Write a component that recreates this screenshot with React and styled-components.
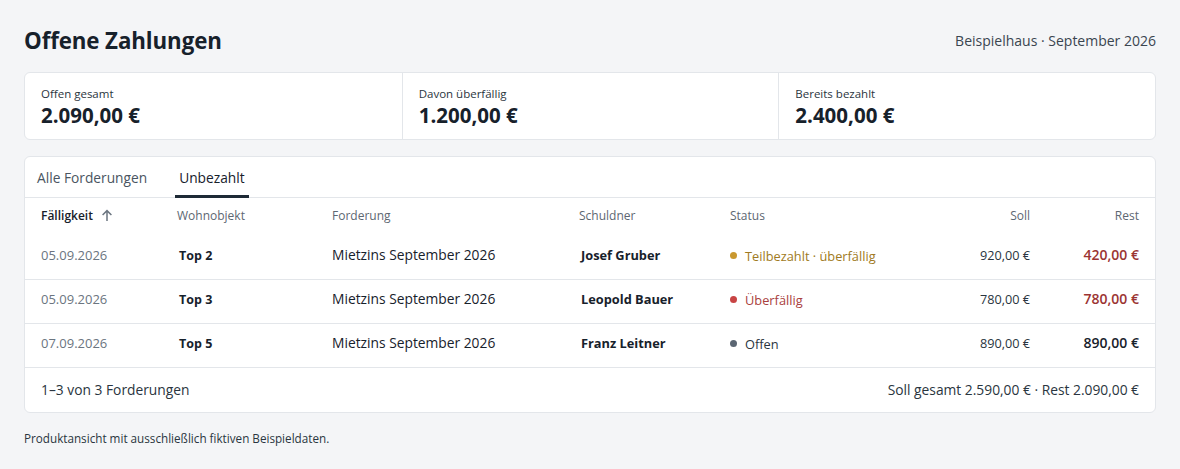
import React from 'react'
import styled, { createGlobalStyle } from 'styled-components'

const GlobalStyle = createGlobalStyle`
  html, body {
    margin: 0;
    padding: 0;
    background: #f4f5f7;
  }
  body {
    font-family: "Open Sans", "Noto Sans", "Liberation Sans", sans-serif;
    color: #1b2530;
  }
`

const Page = styled.div`
  padding: 24px 24px 20px;
`

const Header = styled.header`
  display: flex;
  align-items: center;
  justify-content: space-between;
  height: 32px;
  margin-bottom: 16px;
`

const Title = styled.h1`
  margin: 0;
  font-size: 22.3px;
  font-weight: 700;
  letter-spacing: -0.1px;
  color: #17212b;
`

const Context = styled.div`
  font-size: 14px;
  color: #3a4550;
`

const Stats = styled.section`
  display: grid;
  grid-template-columns: repeat(3, 1fr);
  background: #fff;
  border: 1px solid #e3e6ea;
  border-radius: 6px;
  margin-bottom: 16px;
`

const Stat = styled.div`
  padding: 12px 16px 11px;
  border-left: 1px solid #e3e6ea;
  &:first-child {
    border-left: none;
  }
`

const StatLabel = styled.div`
  font-size: 11.5px;
  color: #2a3540;
  line-height: 17px;
`

const StatValue = styled.div`
  font-size: 20.5px;
  font-weight: 700;
  line-height: 26px;
  color: #17212b;
`

const Card = styled.section`
  background: #fff;
  border: 1px solid #e3e6ea;
  border-radius: 6px;
`

const Tabs = styled.nav`
  display: flex;
  gap: 24px;
  padding: 0 8px;
  height: 40px;
  border-bottom: 1px solid #e3e6ea;
`

const Tab = styled.div`
  display: flex;
  align-items: center;
  padding: 2px 4px 0;
  font-size: 13.75px;
  color: ${p => (p.$active ? '#17212b' : '#4a5561')};
  font-weight: ${p => (p.$active ? 500 : 400)};
  border-bottom: 3px solid ${p => (p.$active ? '#1e2a36' : 'transparent')};
  margin-bottom: -1px;
`

const Table = styled.table`
  width: 100%;
  border-collapse: collapse;
`

const Th = styled.th`
  text-align: ${p => (p.$right ? 'right' : 'left')};
  vertical-align: middle;
  font-size: 12px;
  line-height: 16px;
  font-weight: ${p => (p.$sorted ? 600 : 400)};
  color: ${p => (p.$sorted ? '#17212b' : '#5d6772')};
  height: 36px;
  padding: 0 8px 2px;
  &:first-child {
    padding-left: 16px;
  }
  &:last-child {
    padding-right: 16px;
  }
`

const Tr = styled.tr`
  & + & td {
    border-top: 1px solid #e3e6ea;
  }
`

const Td = styled.td`
  height: 38px;
  padding: 0 8px 5px;
  font-size: 13px;
  line-height: 18px;
  vertical-align: middle;
  text-align: ${p => (p.$right ? 'right' : 'left')};
  &:first-child {
    padding-left: 16px;
  }
  &:last-child {
    padding-right: 16px;
  }
`

const DateText = styled.span`
  font-size: 13px;
  color: #6b7580;
`

const Unit = styled.span`
  font-size: 12.5px;
  font-weight: 700;
  color: #17212b;
  padding-left: 2px;
`

const Claim = styled.span`
  font-size: 13.8px;
  font-weight: 500;
  color: #17212b;
`

const Debtor = styled.span`
  font-size: 12.8px;
  font-weight: 700;
  color: #17212b;
  padding-left: 2px;
`

const Status = styled.span`
  display: inline-flex;
  align-items: center;
  gap: 8px;
  font-size: 12.8px;
  color: ${p => p.$color};
`

const Dot = styled.span`
  width: 7px;
  height: 7px;
  border-radius: 50%;
  background: ${p => p.$color};
`

const Amount = styled.span`
  font-size: 12.7px;
  color: #2a3540;
`

const Rest = styled.span`
  font-size: 14px;
  font-weight: 600;
  color: ${p => (p.$due ? '#9b3432' : '#17212b')};
`

const Footer = styled.div`
  display: flex;
  justify-content: space-between;
  align-items: center;
  height: 43px;
  padding: 0 16px 1px;
  border-top: 1px solid #e3e6ea;
  font-size: 13.8px;
  color: #2a3540;
`

const Note = styled.p`
  margin: 17px 0 0;
  font-size: 11.7px;
  color: #2a3540;
`

const SortArrow = () => (
  <svg width="12" height="13" viewBox="0 0 12 13" style={{ marginLeft: 8, verticalAlign: '-2px' }}>
    <path d="M6 12V1.6M1.6 6L6 1.6 10.4 6" fill="none" stroke="#6b7580" strokeWidth="1.5" />
  </svg>
)

const statusStyles = {
  partial: { dot: '#c9982f', text: '#a07a22', label: 'Teilbezahlt · überfällig' },
  overdue: { dot: '#c84444', text: '#a9403d', label: 'Überfällig' },
  open: { dot: '#5b6672', text: '#2a3540', label: 'Offen' },
}

const rows = [
  { date: '05.09.2026', unit: 'Top 2', claim: 'Mietzins September 2026', debtor: 'Josef Gruber', status: 'partial', soll: '920,00 €', rest: '420,00 €', due: true },
  { date: '05.09.2026', unit: 'Top 3', claim: 'Mietzins September 2026', debtor: 'Leopold Bauer', status: 'overdue', soll: '780,00 €', rest: '780,00 €', due: true },
  { date: '07.09.2026', unit: 'Top 5', claim: 'Mietzins September 2026', debtor: 'Franz Leitner', status: 'open', soll: '890,00 €', rest: '890,00 €', due: false },
]

export default function App() {
  return (
    <>
      <GlobalStyle />
      <Page>
        <Header>
          <Title>Offene Zahlungen</Title>
          <Context>Beispielhaus · September 2026</Context>
        </Header>

        <Stats>
          <Stat>
            <StatLabel>Offen gesamt</StatLabel>
            <StatValue>2.090,00 €</StatValue>
          </Stat>
          <Stat>
            <StatLabel>Davon überfällig</StatLabel>
            <StatValue>1.200,00 €</StatValue>
          </Stat>
          <Stat>
            <StatLabel>Bereits bezahlt</StatLabel>
            <StatValue>2.400,00 €</StatValue>
          </Stat>
        </Stats>

        <Card>
          <Tabs>
            <Tab>Alle Forderungen</Tab>
            <Tab $active>Unbezahlt</Tab>
          </Tabs>
          <Table>
            <colgroup>
              <col style={{ width: 144 }} />
              <col style={{ width: 155 }} />
              <col style={{ width: 247 }} />
              <col style={{ width: 151 }} />
              <col style={{ width: 200 }} />
              <col />
              <col style={{ width: 117 }} />
            </colgroup>
            <thead>
              <tr>
                <Th $sorted>Fälligkeit<SortArrow /></Th>
                <Th>Wohnobjekt</Th>
                <Th>Forderung</Th>
                <Th>Schuldner</Th>
                <Th>Status</Th>
                <Th $right>Soll</Th>
                <Th $right>Rest</Th>
              </tr>
            </thead>
            <tbody>
              {rows.map(r => {
                const s = statusStyles[r.status]
                return (
                  <Tr key={r.unit}>
                    <Td><DateText>{r.date}</DateText></Td>
                    <Td><Unit>{r.unit}</Unit></Td>
                    <Td><Claim>{r.claim}</Claim></Td>
                    <Td><Debtor>{r.debtor}</Debtor></Td>
                    <Td>
                      <Status $color={s.text}>
                        <Dot $color={s.dot} />
                        {s.label}
                      </Status>
                    </Td>
                    <Td $right><Amount>{r.soll}</Amount></Td>
                    <Td $right><Rest $due={r.due}>{r.rest}</Rest></Td>
                  </Tr>
                )
              })}
            </tbody>
          </Table>
          <Footer>
            <span>1–3 von 3 Forderungen</span>
            <span>Soll gesamt 2.590,00 € · Rest 2.090,00 €</span>
          </Footer>
        </Card>

        <Note>Produktansicht mit ausschließlich fiktiven Beispieldaten.</Note>
      </Page>
    </>
  )
}
